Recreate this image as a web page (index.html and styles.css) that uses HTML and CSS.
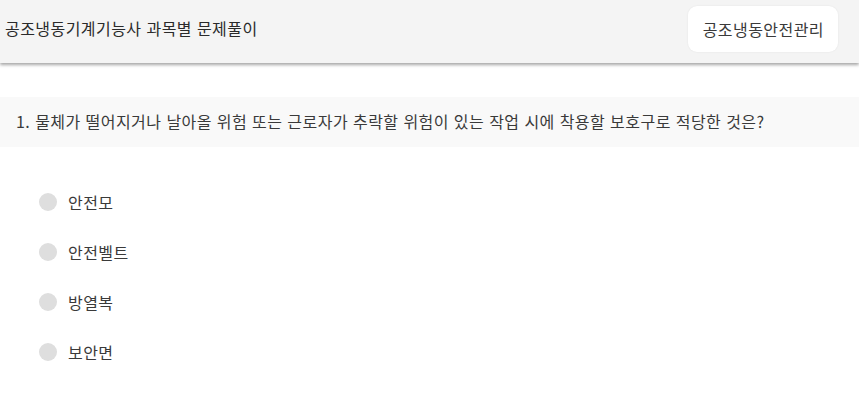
FILE: index.html
```html
<!DOCTYPE html>
<html lang="ko">
<head>
    <meta charset="UTF-8">
    <meta name="viewport" content="width=device-width, initial-scale=1.0">
    <title>공조냉동기계기능사 과목별 문제풀이</title>
    <link rel="stylesheet" href="styles.css">
</head>
<body>
    <header class="top-bar">
        <h1 class="top-title">공조냉동기계기능사 과목별 문제풀이</h1>
        <button class="subject-btn">공조냉동안전관리</button>
    </header>

    <main class="quiz">
        <p class="question">1. 물체가 떨어지거나 날아올 위험 또는 근로자가 추락할 위험이 있는 작업 시에 착용할 보호구로 적당한 것은?</p>

        <ul class="choices">
            <li class="choice"><span class="radio"></span>안전모</li>
            <li class="choice"><span class="radio"></span>안전벨트</li>
            <li class="choice"><span class="radio"></span>방열복</li>
            <li class="choice"><span class="radio"></span>보안면</li>
        </ul>
    </main>
</body>
</html>
```

FILE: styles.css
```css
* {
    box-sizing: border-box;
}

body {
    margin: 0;
    font-family: "Noto Sans CJK KR", "Noto Sans", sans-serif;
    font-size: 16px;
    letter-spacing: 0.45px;
    color: #333;
    background: #fff;
}

.top-bar {
    height: 63px;
    display: flex;
    justify-content: space-between;
    align-items: flex-start;
    padding: 6px 21px 0 5px;
    background: #f4f4f4;
    box-shadow: 0 2px 3px rgba(0, 0, 0, 0.35);
}

.top-title {
    margin: 0;
    font-size: 16px;
    font-weight: normal;
    line-height: 45px;
    color: #2a2a2a;
}

.subject-btn {
    height: 46px;
    padding: 0 14px 0 15px;
    border: none;
    border-radius: 9px;
    background: #fff;
    font-family: inherit;
    font-size: 16px;
    letter-spacing: inherit;
    color: #3a3a3a;
    box-shadow: 0 0 2px rgba(0, 0, 0, 0.08);
}

.quiz {
    padding-top: 34px;
}

.question {
    margin: 0;
    height: 50px;
    line-height: 49px;
    padding-left: 16px;
    background: #f9f9f9;
    color: #3a3a3a;
}

.choices {
    list-style: none;
    margin: 0;
    padding: 30px 0 0 39px;
}

.choice {
    display: flex;
    align-items: center;
    height: 50px;
    color: #3a3a3a;
}

.radio {
    width: 18px;
    height: 18px;
    border-radius: 50%;
    background: #dedede;
    margin-right: 11px;
}
```
